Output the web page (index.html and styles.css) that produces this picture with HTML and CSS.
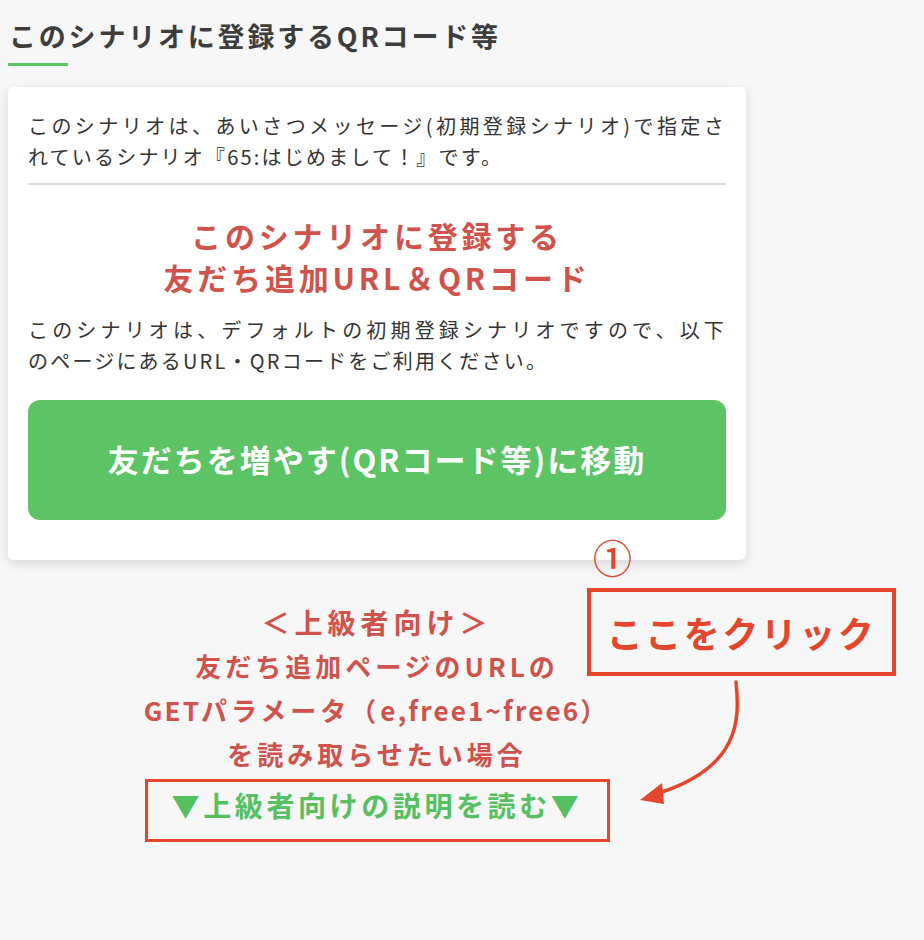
FILE: index.html
```html
<!DOCTYPE html>
<html lang="ja">
<head>
<meta charset="utf-8">
<title>QRコード等</title>
<link rel="stylesheet" href="styles.css">
</head>
<body>
<div class="page">
  <h2 class="section-title">このシナリオに登録するQRコード等</h2>
  <div class="title-bar"></div>

  <div class="card">
    <p class="note"><span class="jline">このシナリオは、あいさつメッセージ(初期登録シナリオ)で指定さ</span>れているシナリオ『65:はじめまして！』です。</p>
    <hr class="divider">
    <h3 class="card-heading">このシナリオに登録する<br>友だち追加URL＆QRコード</h3>
    <p class="note"><span class="jline">このシナリオは、デフォルトの初期登録シナリオですので、以下</span>のページにあるURL・QRコードをご利用ください。</p>
    <a class="go-button" href="#">友だちを増やす(QRコード等)に移動</a>
  </div>

  <div class="advanced">
    <p class="adv-lead">＜上級者向け＞</p>
    <p class="adv-text">友だち追加ページのURLの<br><span class="latin">GET</span>パラメータ（<span class="latin">e,free1~free6</span>）<br>を読み取らせたい場合</p>
    <a class="adv-link" href="#">▼上級者向けの説明を読む▼</a>
  </div>

  <div class="anno-num">①</div>
  <div class="anno-box">ここをクリック</div>
  <svg class="anno-arrow" width="140" height="140" viewBox="0 0 140 140">
    <path d="M106 2 C110 40 110 88 26 114" fill="none" stroke="#e5452b" stroke-width="3.5" stroke-linecap="round"/>
    <path d="M10 120 L32 103 L34 124 Z" fill="#e5452b"/>
  </svg>
</div>
</body>
</html>
```
FILE: styles.css
```css
* { box-sizing: border-box; }
html, body { margin: 0; padding: 0; }
body {
  background: #f7f7f7;
  font-family: "Noto Sans CJK JP", "Noto Sans", sans-serif;
  color: #333;
}
.page {
  position: relative;
  width: 924px;
  min-height: 940px;
  padding: 16px 0 0 8px;
}
.section-title {
  margin: 0;
  padding-left: 1px;
  font-size: 27px;
  font-weight: 700;
  letter-spacing: 2.8px;
  line-height: 40px;
  color: #3d3d3d;
}
.title-bar {
  width: 60px;
  height: 3px;
  background: #5cc464;
  margin-top: 7px;
}
.card {
  width: 738px;
  margin-top: 21px;
  background: #fff;
  border-radius: 6px;
  box-shadow: 0 4px 12px rgba(0, 0, 0, 0.13);
  padding: 23px 20px 40px;
}
.note {
  margin: 0;
  font-size: 20px;
  line-height: 31px;
  letter-spacing: 2.2px;
  color: #333;
}
.jline {
  display: block;
  text-align: justify;
  text-align-last: justify;
}
.divider {
  border: 0;
  height: 2px;
  background: #dcdcdc;
  margin: 11px 0 29px;
}
.card-heading {
  margin: 0 0 16px;
  text-align: center;
  font-size: 30px;
  line-height: 42px;
  letter-spacing: 3.8px;
  font-weight: 700;
  color: #d0524a;
}
.go-button {
  display: flex;
  align-items: center;
  justify-content: center;
  margin-top: 24px;
  height: 120px;
  padding-bottom: 4px;
  border-radius: 12px;
  background: #5cc464;
  color: #fff;
  font-size: 31px;
  font-weight: 700;
  letter-spacing: 2px;
  text-decoration: none;
}
.advanced {
  width: 738px;
  margin-top: 40px;
  text-align: center;
}
.adv-lead {
  margin: 0;
  font-size: 28px;
  line-height: 44px;
  letter-spacing: 5px;
  font-weight: 700;
  color: #d0524a;
}
.adv-text {
  margin: 0;
  font-size: 26px;
  line-height: 44px;
  letter-spacing: 4px;
  font-weight: 700;
  color: #d0524a;
}
.latin {
  letter-spacing: 2.2px;
}
.adv-link {
  display: inline-block;
  margin-top: 3px;
  width: 465px;
  height: 63px;
  border: 3px solid #e5452b;
  padding-top: 3px;
  font-size: 28px;
  line-height: 40px;
  letter-spacing: 3.6px;
  font-weight: 700;
  color: #55c05f;
  text-decoration: none;
}
.anno-num {
  position: absolute;
  left: 593px;
  top: 533px;
  font-size: 39px;
  line-height: 46px;
  font-weight: 500;
  color: #e5452b;
}
.anno-box {
  position: absolute;
  left: 587px;
  top: 588px;
  width: 309px;
  height: 88px;
  border: 4px solid #e5452b;
  display: flex;
  align-items: center;
  justify-content: center;
  font-size: 36px;
  font-weight: 700;
  letter-spacing: 2.5px;
  color: #e5452b;
}
.anno-arrow {
  position: absolute;
  left: 630px;
  top: 680px;
  overflow: visible;
}
```
